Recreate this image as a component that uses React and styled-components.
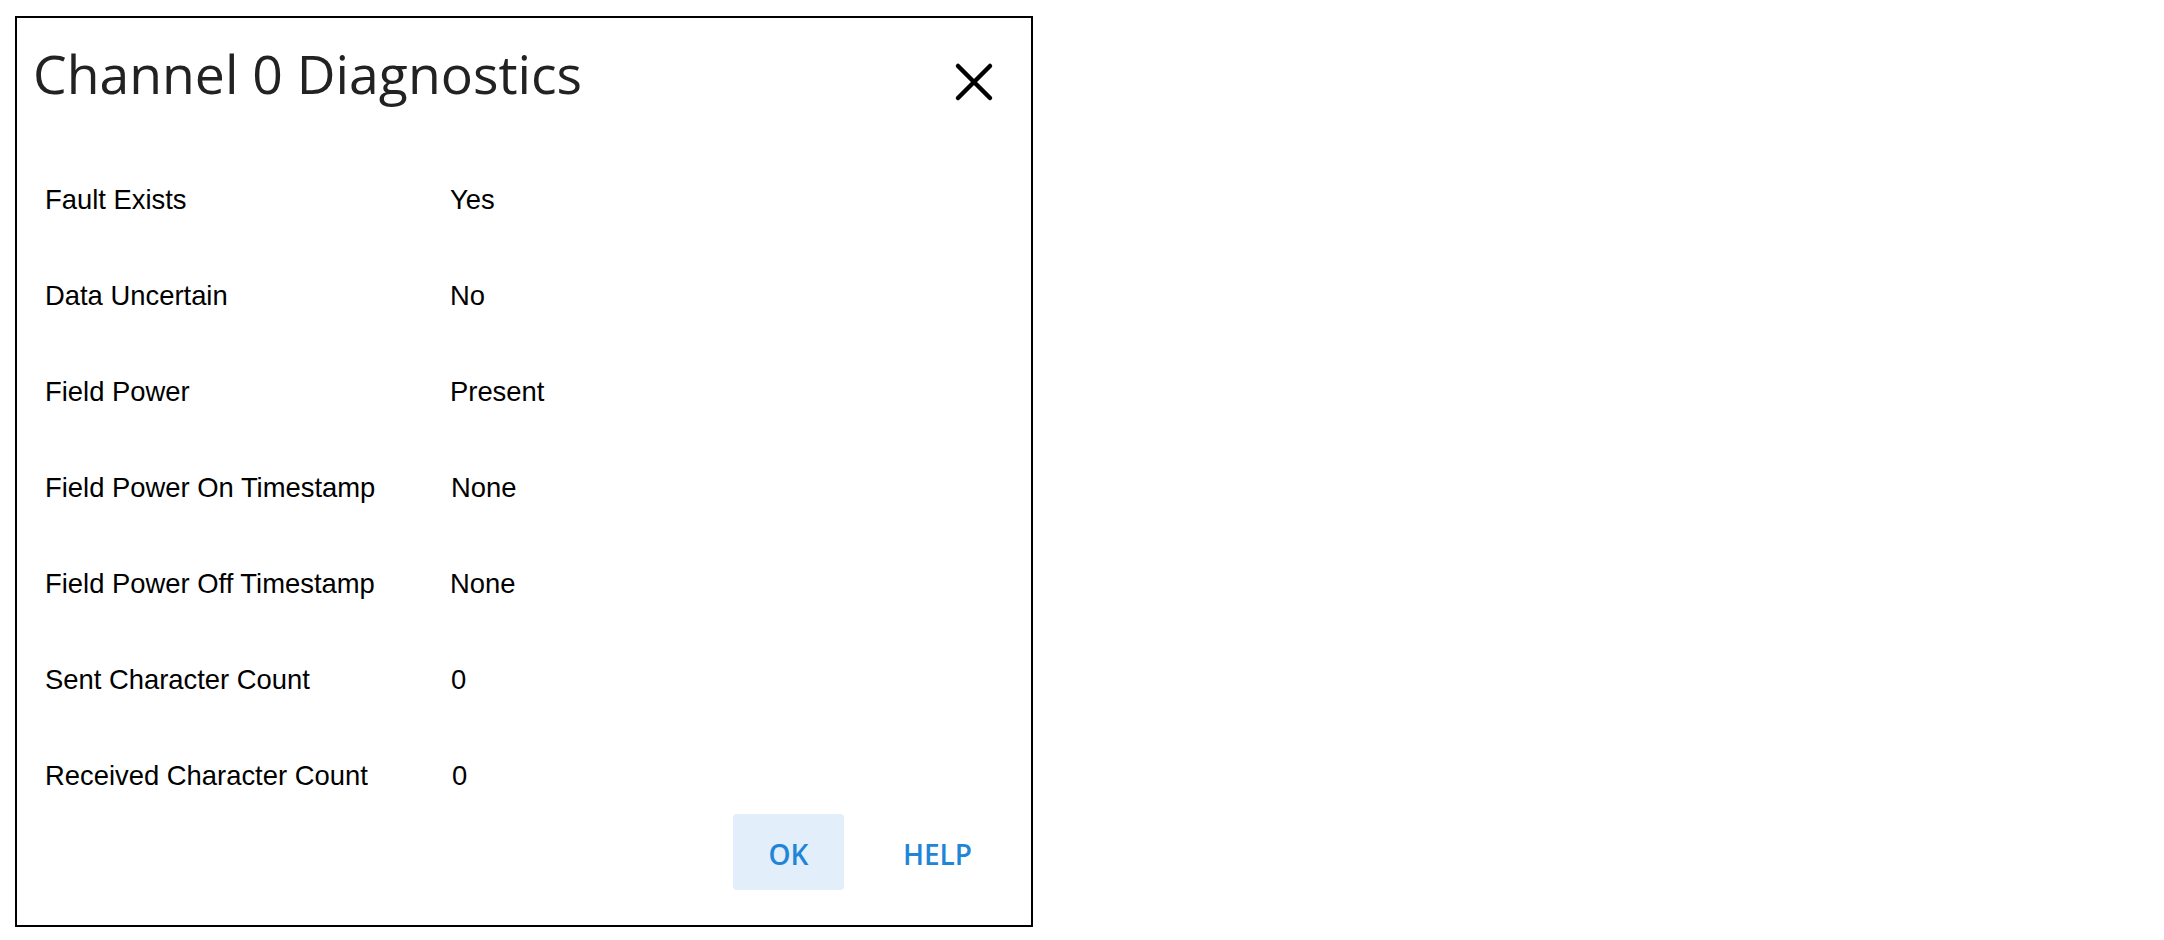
import React from "react";
import styled, { createGlobalStyle } from "styled-components";

const GlobalStyle = createGlobalStyle`
  body {
    margin: 0;
    background: #ffffff;
  }
`;

const Page = styled.div`
  padding: 16px 0 0 15px;
`;

const Dialog = styled.div`
  box-sizing: border-box;
  width: 1018px;
  border: 2px solid #000;
  background: #fff;
  padding: 24px 38px 35px 16px;
`;

const Header = styled.div`
  display: flex;
  justify-content: space-between;
  align-items: flex-start;
`;

const Title = styled.h2`
  margin: 0;
  font-family: "Open Sans", "Noto Sans", sans-serif;
  font-weight: 400;
  font-size: 53.5px;
  line-height: 64px;
  color: #222;
`;

const CloseButton = styled.button`
  margin-top: 20px;
  margin-right: -1px;
  padding: 0;
  border: none;
  background: none;
  width: 40px;
  height: 40px;
  cursor: pointer;
`;

const List = styled.div`
  display: grid;
  grid-template-columns: 404px 1fr;
  row-gap: 56px;
  margin: 74px 0 0 12px;
`;

const Cell = styled.div`
  font-family: "Liberation Sans", Arial, sans-serif;
  font-size: 27.4px;
  line-height: 40px;
  color: #000;
  padding-left: ${(props) => props.indent || 0}px;
`;

const Footer = styled.div`
  display: flex;
  justify-content: flex-end;
  gap: 38px;
  margin-top: 18px;
`;

const Button = styled.button`
  width: 111px;
  height: 76px;
  padding: 4px 0 0;
  border: none;
  border-radius: 4px;
  background: ${(props) => (props.primary ? "#e2eefa" : "transparent")};
  color: #1f85d8;
  font-family: "Open Sans", "Noto Sans", sans-serif;
  font-weight: 600;
  font-size: 28px;
  cursor: pointer;
`;

const rows = [
  ["Fault Exists", "Yes", 1],
  ["Data Uncertain", "No", 1],
  ["Field Power", "Present", 1],
  ["Field Power On Timestamp", "None", 2],
  ["Field Power Off Timestamp", "None", 1],
  ["Sent Character Count", "0", 2],
  ["Received Character Count", "0", 3],
];

const App = () => (
  <Page>
    <GlobalStyle />
    <Dialog>
      <Header>
        <Title>Channel 0 Diagnostics</Title>
        <CloseButton aria-label="Close">
          <svg width="40" height="40" viewBox="0 0 40 40">
            <path
              d="M4 4 L36 36 M36 4 L4 36"
              stroke="#000"
              strokeWidth="4.5"
              strokeLinecap="round"
            />
          </svg>
        </CloseButton>
      </Header>
      <List>
        {rows.map(([label, value, indent]) => (
          <React.Fragment key={label}>
            <Cell>{label}</Cell>
            <Cell indent={indent}>{value}</Cell>
          </React.Fragment>
        ))}
      </List>
      <Footer>
        <Button primary>OK</Button>
        <Button>HELP</Button>
      </Footer>
    </Dialog>
  </Page>
);

export default App;
